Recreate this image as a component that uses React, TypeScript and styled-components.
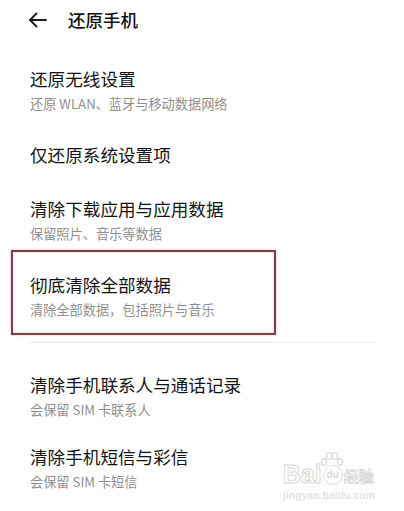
import React from "react";
import styled, { createGlobalStyle } from "styled-components";

const GlobalStyle = createGlobalStyle`
  html, body {
    margin: 0;
    padding: 0;
    background: #ffffff;
  }
  body {
    font-family: "Noto Sans CJK SC", "Noto Sans", sans-serif;
    -webkit-font-smoothing: antialiased;
  }
`;

type Entry = {
  title: string;
  subtitle?: string;
  marked?: boolean;
};

const firstGroup: Entry[] = [
  { title: "还原无线设置", subtitle: "还原 WLAN、蓝牙与移动数据网络" },
  { title: "仅还原系统设置项" },
  { title: "清除下载应用与应用数据", subtitle: "保留照片、音乐等数据" },
  { title: "彻底清除全部数据", subtitle: "清除全部数据，包括照片与音乐", marked: true }
];

const secondGroup: Entry[] = [
  { title: "清除手机联系人与通话记录", subtitle: "会保留 SIM 卡联系人" },
  { title: "清除手机短信与彩信", subtitle: "会保留 SIM 卡短信" }
];

const BackArrow = () => (
  <svg width="19" height="16" viewBox="0 0 19 16" fill="none">
    <path d="M18 8H2" stroke="#1c1c1c" strokeWidth="1.8" strokeLinecap="round" />
    <path d="M8.5 1.5L2 8l6.5 6.5" stroke="#1c1c1c" strokeWidth="1.8" strokeLinecap="round" strokeLinejoin="round" />
  </svg>
);

// the paw mark of the watermark
const Paw = () => (
  <svg width="24" height="16" viewBox="0 0 24 16" fill="none" stroke="#dedede" strokeWidth="1.4">
    <ellipse cx="4" cy="11" rx="2.6" ry="3.2" />
    <ellipse cx="9" cy="5" rx="2.8" ry="3.4" />
    <ellipse cx="15" cy="5" rx="2.8" ry="3.4" />
    <ellipse cx="20" cy="11" rx="2.6" ry="3.2" />
  </svg>
);

const Row = ({ title, subtitle, marked, tight }: Entry & { tight?: boolean }) => (
  <Item $tight={tight}>
    {marked && <Marker />}
    <ItemTitle>{title}</ItemTitle>
    {subtitle && <ItemSubtitle>{subtitle}</ItemSubtitle>}
  </Item>
);

const App = () => (
  <>
    <GlobalStyle />
    <Screen>
      <Header>
        <BackButton>
          <BackArrow />
        </BackButton>
        <HeaderTitle>还原手机</HeaderTitle>
      </Header>
      <List>
        {firstGroup.map(entry => (
          <Row key={entry.title} {...entry} />
        ))}
      </List>
      <Divider />
      <List $second>
        {secondGroup.map(entry => (
          <Row key={entry.title} {...entry} tight />
        ))}
      </List>
      <Watermark>
        <WatermarkLogo>
          <LogoLatin>Bai</LogoLatin>
          <PawBadge>
            <PawTop>
              <Paw />
            </PawTop>
            du
          </PawBadge>
          <LogoCjk>经验</LogoCjk>
        </WatermarkLogo>
        <WatermarkUrl>jingyan.baidu.com</WatermarkUrl>
      </Watermark>
    </Screen>
  </>
);

const Screen = styled.div`
  position: relative;
  width: 404px;
  height: 511px;
  overflow: hidden;
  background: #ffffff;
`;

const Header = styled.div`
  height: 40px;
  display: flex;
  align-items: center;
  padding-left: 28px;
  gap: 21px;
`;

const BackButton = styled.div`
  width: 19px;
  height: 16px;
  display: flex;
  align-items: center;
  justify-content: center;
`;

const HeaderTitle = styled.h1`
  margin: 0;
  font-size: 17.5px;
  font-weight: 500;
  color: #111111;
  line-height: 24px;
`;

const List = styled.div<{ $second?: boolean }>`
  display: flex;
  flex-direction: column;
  padding-top: ${p => (p.$second ? "17px" : "12px")};
`;

const Item = styled.div<{ $tight?: boolean }>`
  position: relative;
  display: flex;
  flex-direction: column;
  padding: ${p => (p.$tight ? "13px 30px" : "15px 30px")};
`;

const Marker = styled.div`
  position: absolute;
  top: -8px;
  bottom: -1px;
  left: 11px;
  width: 265px;
  box-sizing: border-box;
  border: 2px solid #7c4148;
  box-shadow: 0 0 2px rgba(214, 96, 110, 0.55), inset 0 0 2px rgba(214, 96, 110, 0.45);
  pointer-events: none;
`;

const ItemTitle = styled.div`
  font-size: 17.6px;
  line-height: 24px;
  color: #141414;
  white-space: nowrap;
`;

const ItemSubtitle = styled.div`
  margin-top: 4px;
  font-size: 13.2px;
  line-height: 18px;
  color: #8f8f8f;
  white-space: nowrap;
`;

const Divider = styled.div`
  margin: 8px 29px 0 30px;
  height: 1px;
  background: #ebebeb;
`;

const Watermark = styled.div`
  position: absolute;
  right: 29px;
  bottom: 10px;
  display: flex;
  flex-direction: column;
  align-items: stretch;
  pointer-events: none;
`;

const WatermarkLogo = styled.div`
  display: flex;
  align-items: flex-end;
  gap: 1px;
`;

const LogoLatin = styled.span`
  font-family: "Liberation Sans", sans-serif;
  font-size: 25px;
  font-weight: 700;
  line-height: 22px;
  color: transparent;
  -webkit-text-stroke: 1px #d8d8d8;
`;

const LogoCjk = styled.span`
  font-family: "Noto Sans CJK SC", sans-serif;
  font-size: 15px;
  font-weight: 700;
  line-height: 19px;
  color: transparent;
  -webkit-text-stroke: 0.8px #d4d4d4;
`;

const PawBadge = styled.div`
  position: relative;
  width: 20px;
  height: 20px;
  border: 1.5px solid #dcdcdc;
  border-radius: 50%;
  font-family: "Liberation Sans", sans-serif;
  font-size: 10px;
  font-weight: 700;
  line-height: 17px;
  color: #d8d8d8;
  text-align: center;
  box-sizing: border-box;
`;

const PawTop = styled.div`
  position: absolute;
  left: -4px;
  top: -15px;
  line-height: 0;
`;

const WatermarkUrl = styled.div`
  margin-top: 4px;
  font-family: "Liberation Sans", sans-serif;
  font-size: 10.5px;
  font-weight: 700;
  line-height: 12px;
  color: #e4e4e4;
  text-align: center;
`;

export default App;
